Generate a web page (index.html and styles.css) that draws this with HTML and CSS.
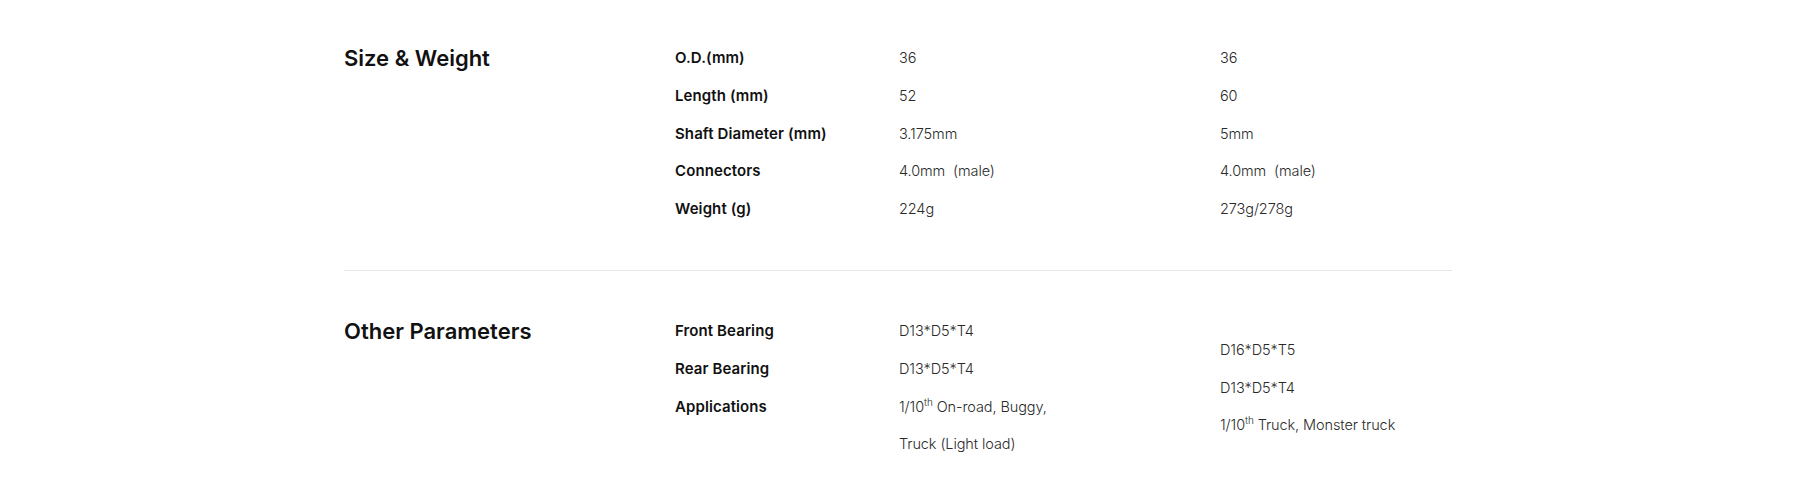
FILE: index.html
```html
<!DOCTYPE html>
<html lang="en">
<head>
<meta charset="utf-8">
<title>Specifications</title>
<link rel="stylesheet" href="styles.css">
</head>
<body>
<div class="specs">
  <section class="spec-section first">
    <h2 class="spec-title">Size &amp; Weight</h2>
    <ul class="spec-col labels">
      <li>O.D.(mm)</li>
      <li>Length (mm)</li>
      <li>Shaft Diameter (mm)</li>
      <li>Connectors</li>
      <li>Weight (g)</li>
    </ul>
    <ul class="spec-col values">
      <li>36</li>
      <li>52</li>
      <li>3.175mm</li>
      <li>4.0mm&nbsp;&nbsp;(male)</li>
      <li>224g</li>
    </ul>
    <ul class="spec-col values last">
      <li>36</li>
      <li>60</li>
      <li>5mm</li>
      <li>4.0mm&nbsp;&nbsp;(male)</li>
      <li>273g/278g</li>
    </ul>
  </section>
  <section class="spec-section second">
    <h2 class="spec-title">Other Parameters</h2>
    <ul class="spec-col labels">
      <li>Front Bearing</li>
      <li>Rear Bearing</li>
      <li>Applications</li>
    </ul>
    <ul class="spec-col values">
      <li>D13*D5*T4</li>
      <li>D13*D5*T4</li>
      <li>1/10<sup>th</sup> On-road, Buggy,</li>
      <li>Truck (Light load)</li>
    </ul>
    <ul class="spec-col values last centered">
      <li>D16*D5*T5</li>
      <li>D13*D5*T4</li>
      <li>1/10<sup>th</sup> Truck, Monster truck</li>
    </ul>
  </section>
</div>
</body>
</html>
```
FILE: styles.css
```css
html, body {
  margin: 0;
  padding: 0;
  background: #ffffff;
}

body {
  font-family: Inter, "Noto Sans", "Liberation Sans", sans-serif;
  color: #111111;
}

.specs {
  width: 1108px;
  margin-left: 344px;
  padding-top: 39px;
}

.spec-section {
  display: flex;
  align-items: flex-start;
}

.spec-section.first {
  padding-bottom: 42px;
  border-bottom: 1px solid #e6e6e6;
}

.spec-section.second {
  padding-top: 41px;
}

.spec-title {
  width: 331px;
  flex: none;
  margin: 0;
  font-size: 22px;
  font-weight: 600;
  line-height: 38px;
  letter-spacing: 0;
  color: #111111;
}

.spec-col {
  list-style: none;
  margin: 0;
  padding: 0;
  font-size: 14.5px;
  line-height: 37.8px;
}

.labels {
  width: 224px;
  flex: none;
  font-size: 15px;
  font-weight: 600;
  color: #111111;
  letter-spacing: 0.1px;
}

.values {
  width: 321px;
  flex: none;
  font-weight: 300;
  color: #2a2a2a;
  letter-spacing: -0.1px;
}

.values.last {
  width: auto;
  flex: 1;
}

.values.centered {
  align-self: center;
}

.values sup {
  font-size: 10px;
  line-height: 0;
  vertical-align: 6px;
}
```
